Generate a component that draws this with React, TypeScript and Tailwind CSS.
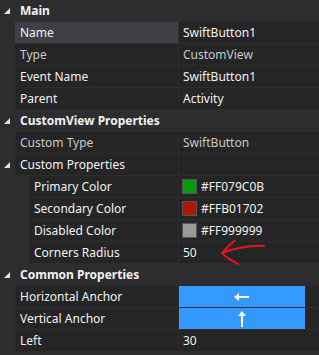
import React from "react";

type Row = {
  label: string;
  value?: string;
  swatch?: string;
  dim?: boolean;
  nested?: boolean;
  selected?: boolean;
  button?: "left" | "up";
  group?: boolean;
  arrow?: boolean;
};

const font = { fontFamily: '"Noto Sans", "Segoe UI", sans-serif' };

function Header({ title }: { title: string }) {
  return (
    <div className="flex h-[22px] items-center bg-[#2d2d30]">
      <Triangle />
      <span className="ml-[9px] text-[12px] font-bold text-[#f1f1f1]">{title}</span>
    </div>
  );
}

function Triangle() {
  return (
    <svg width="7" height="7" viewBox="0 0 7 7" className="ml-[4px] shrink-0">
      <polygon points="6,0 6,6 0,6" fill="#e0e0e0" />
    </svg>
  );
}

function RedArrow() {
  return (
    <svg
      width="60"
      height="30"
      viewBox="0 0 60 30"
      className="pointer-events-none absolute left-[214px] top-[-2px]"
    >
      <path
        d="M50 6 C40 5 20 8 8 13 M8 13 C12 8 17 4 21 0 M8 13 C12 18 18 20 24 24"
        fill="none"
        stroke="#e8131a"
        strokeWidth="2"
        strokeLinecap="round"
      />
    </svg>
  );
}

function PropRow({ row }: { row: Row }) {
  const labelColor = row.dim ? "text-[#c8c8c8]" : "text-[#f1f1f1]";
  return (
    <div className="relative flex h-[22px] bg-[#2d2d30]">
      <div
        className={`flex shrink-0 items-center ${row.nested ? "w-[29px]" : "w-[15px]"}`}
      >
        {row.group && <Triangle />}
      </div>
      <div
        className={`flex flex-1 items-center border-b border-[#2d2d30] ${
          row.selected ? "bg-[#3f3f46]" : "bg-[#252526]"
        }`}
      >
        <span className={`ml-[5px] text-[12px] ${labelColor} whitespace-nowrap`}>
          {row.label}
        </span>
      </div>
      <div className="w-px shrink-0 bg-[#2d2d30]" />
      <div className="flex w-[140px] shrink-0 items-center border-b border-[#2d2d30] bg-[#252526]">
        {row.button ? (
          <div className="flex h-[21px] w-[126px] items-center justify-center bg-[#3399ff]">
            {row.button === "left" ? (
              <svg width="16" height="8" viewBox="0 0 16 8">
                <path d="M15 4 H3" stroke="#fff" strokeWidth="2" />
                <polygon points="0,4 5,0 5,8" fill="#fff" />
              </svg>
            ) : (
              <svg width="8" height="16" viewBox="0 0 8 16">
                <path d="M4 16 V3" stroke="#fff" strokeWidth="2" />
                <polygon points="4,0 0,5 8,5" fill="#fff" />
              </svg>
            )}
          </div>
        ) : (
          <>
            {row.swatch && (
              <div
                className="ml-[3px] h-[15px] w-[15px] shrink-0 border border-[#555]"
                style={{ backgroundColor: row.swatch }}
              />
            )}
            {row.value && (
              <span
                className={`ml-[4px] text-[12px] whitespace-nowrap ${
                  row.dim ? "text-[#c8c8c8]" : "text-[#f1f1f1]"
                }`}
              >
                {row.value}
              </span>
            )}
          </>
        )}
      </div>
      {row.arrow && <RedArrow />}
    </div>
  );
}

const main: Row[] = [
  { label: "Name", value: "SwiftButton1", selected: true },
  { label: "Type", value: "CustomView", dim: true },
  { label: "Event Name", value: "SwiftButton1" },
  { label: "Parent", value: "Activity" },
];

const customView: Row[] = [
  { label: "Custom Type", value: "SwiftButton", dim: true },
  { label: "Custom Properties", group: true },
  { label: "Primary Color", value: "#FF079C0B", swatch: "#079c0b", nested: true },
  { label: "Secondary Color", value: "#FFB01702", swatch: "#b01702", nested: true },
  { label: "Disabled Color", value: "#FF999999", swatch: "#999999", nested: true },
  { label: "Corners Radius", value: "50", nested: true, arrow: true },
];

const common: Row[] = [
  { label: "Horizontal Anchor", button: "left" },
  { label: "Vertical Anchor", button: "up" },
  { label: "Left", value: "30" },
];

export default function App() {
  return (
    <div className="h-[355px] w-[319px] overflow-hidden bg-[#2d2d30]" style={font}>
      <Header title="Main" />
      {main.map((r) => (
        <PropRow key={r.label} row={r} />
      ))}
      <Header title="CustomView Properties" />
      {customView.map((r) => (
        <PropRow key={r.label} row={r} />
      ))}
      <Header title="Common Properties" />
      {common.map((r) => (
        <PropRow key={r.label} row={r} />
      ))}
    </div>
  );
}
